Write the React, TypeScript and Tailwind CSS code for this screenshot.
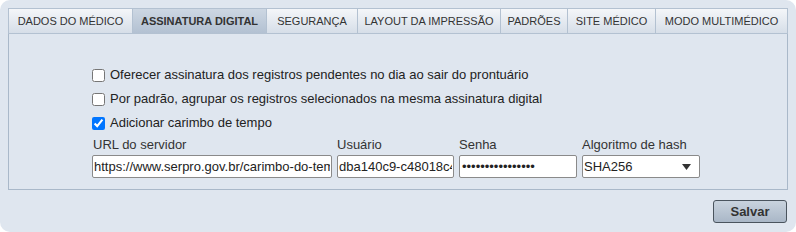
import { useState } from 'react';

const TABS = [
  { key: 'dados', label: 'DADOS DO MÉDICO', w: 'w-[125px] border-l' },
  { key: 'assinatura', label: 'ASSINATURA DIGITAL', w: 'w-[134px]' },
  { key: 'seguranca', label: 'SEGURANÇA', w: 'w-[91px]' },
  { key: 'layout', label: 'LAYOUT DA IMPRESSÃO', w: 'w-[143px]' },
  { key: 'padroes', label: 'PADRÕES', w: 'w-[67px]' },
  { key: 'site', label: 'SITE MÉDICO', w: 'w-[88px]' },
  { key: 'multi', label: 'MODO MULTIMÉDICO', w: 'w-[132px]' },
];

const OPTIONS = [
  { label: 'Oferecer assinatura dos registros pendentes no dia ao sair do prontuário', checked: false },
  { label: 'Por padrão, agrupar os registros selecionados na mesma assinatura digital', checked: false },
  { label: 'Adicionar carimbo de tempo', checked: true },
];

export default function App() {
  const [tab, setTab] = useState('assinatura');

  return (
    <div className="w-[796px] h-[232px] rounded-[10px] bg-[#dfe6ef] p-2 font-['Liberation_Sans',Arial,sans-serif] text-[#222]">
      {/* Tabs */}
      <div className="flex h-[26px]">
        {TABS.map((t) => (
          <button
            key={t.key}
            onClick={() => setTab(t.key)}
            className={
              `${t.w} flex items-center justify-center border-y border-r border-[#b3c1d1] text-[11px] text-[#333] whitespace-nowrap ` +
              (tab === t.key
                ? 'font-bold bg-gradient-to-b from-[#cdd7e3] to-[#b3c1d2]'
                : 'bg-gradient-to-b from-[#f4f6f9] to-[#d6dee8]')
            }
          >
            {t.label}
          </button>
        ))}
      </div>

      {/* Panel */}
      <div className="h-[156px] border-x border-b border-[#a9b8c9] pl-[83px] pt-[29px]">
        {OPTIONS.map((o) => (
          <label key={o.label} className="flex h-6 items-center gap-[5px] text-[13px]">
            <input type="checkbox" defaultChecked={o.checked} className="m-0 h-[13px] w-[13px]" />
            <span>{o.label}</span>
          </label>
        ))}

        <div className="mt-[2px] grid grid-cols-[240px_117px_118px_118px] gap-x-[5px] text-[13px] text-[#333]">
          <span className="h-4 leading-4 pl-px">URL do servidor</span>
          <span className="h-4 leading-4">Usuário</span>
          <span className="h-4 leading-4">Senha</span>
          <span className="h-4 leading-4">Algoritmo de hash</span>

          <input
            className="mt-[2px] h-[23px] rounded-[2px] border border-[#8a8a8a] bg-white px-px text-[13px] text-[#222] outline-none"
            defaultValue="https://www.serpro.gov.br/carimbo-do-tempo/api"
          />
          <input
            className="mt-[2px] h-[23px] rounded-[2px] border border-[#8a8a8a] bg-white px-px text-[13px] text-[#222] outline-none"
            defaultValue="dba140c9-c48018c4-4b2e-9a1f"
          />
          <input
            type="password"
            className="mt-[2px] h-[23px] rounded-[2px] border border-[#8a8a8a] bg-white px-[2px] text-[13px] text-[#222] outline-none"
            defaultValue="senhasecreta1234"
          />
          <div className="relative mt-[2px] h-[23px]">
            <select className="h-full w-full appearance-none rounded-[2px] border border-[#8a8a8a] bg-white px-px text-[13px] text-[#222] outline-none">
              <option>SHA256</option>
              <option>SHA512</option>
            </select>
            <svg className="pointer-events-none absolute right-[9px] top-[9px] h-[6px] w-[9px]" viewBox="0 0 9 6">
              <path d="M0 0h9L4.5 6z" fill="#333" />
            </svg>
          </div>
        </div>
      </div>

      {/* Footer */}
      <div className="mt-[10px] flex justify-end pr-px">
        <button className="h-[23px] w-[74px] rounded-[3px] border border-[#4a545e] bg-gradient-to-b from-[#c9d3de] to-[#a9b7c7] text-[13px] font-bold text-[#333]">
          Salvar
        </button>
      </div>
    </div>
  );
}
